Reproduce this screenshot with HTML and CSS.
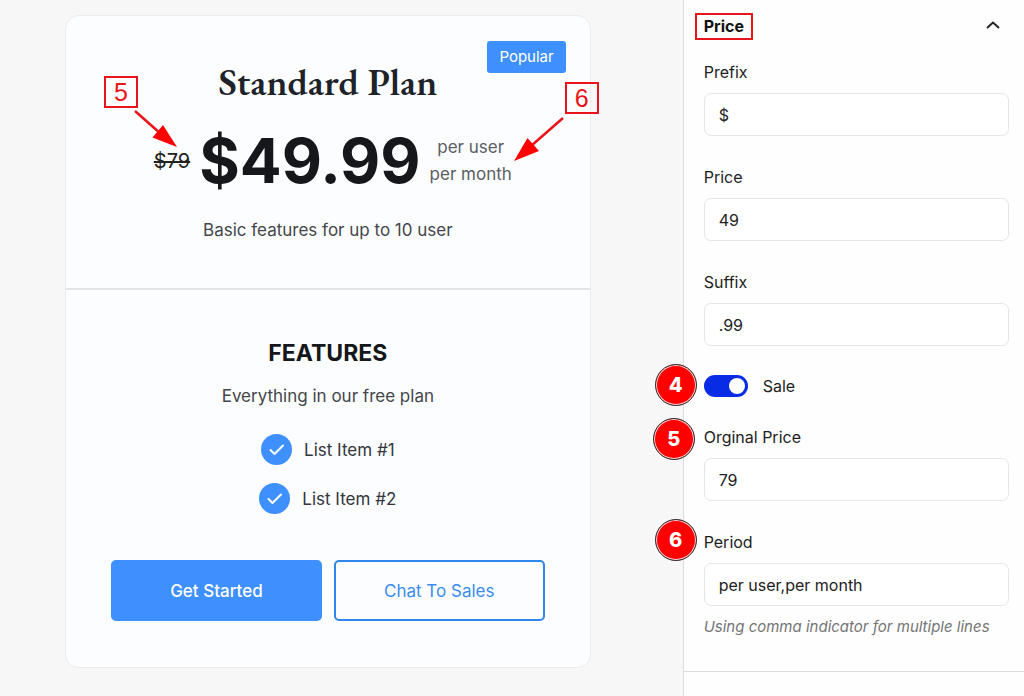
FILE: index.html
```html
<!DOCTYPE html>
<html lang="en">
<head>
    <meta charset="UTF-8">
    <meta name="viewport" content="width=device-width, initial-scale=1.0">
    <title>Pricing Table - Price Settings</title>
    <link rel="stylesheet" href="styles.css">
</head>
<body>
    <div class="editor">
        <main class="canvas">
            <article class="card">
                <span class="badge">Popular</span>

                <header class="card-header">
                    <h2 class="plan-title">Standard Plan</h2>
                    <div class="price-row">
                        <del class="old-price">$79</del>
                        <span class="price">$49.99</span>
                        <span class="period">per user<br>per month</span>
                    </div>
                    <p class="text">Basic features for up to 10 user</p>
                </header>

                <section class="card-body">
                    <h3 class="features-title">FEATURES</h3>
                    <p class="text">Everything in our free plan</p>
                    <ul class="features">
                        <li>
                            <svg class="check" viewBox="0 0 31 31"><circle cx="15.5" cy="15.5" r="15.5"/><path d="M9.5 16l4 4 8.500-8.500"/></svg>
                            List Item #1
                        </li>
                        <li>
                            <svg class="check" viewBox="0 0 31 31"><circle cx="15.5" cy="15.5" r="15.5"/><path d="M9.5 16l4 4 8.500-8.500"/></svg>
                            List Item #2
                        </li>
                    </ul>
                    <div class="buttons">
                        <button class="btn btn-primary" type="button">Get Started</button>
                        <button class="btn btn-outline" type="button">Chat To Sales</button>
                    </div>
                </section>

                <!-- callouts -->
                <span class="callout callout-old">5</span>
                <svg class="arrow arrow-old" viewBox="0 0 46 40">
                    <path class="line" d="M2 2l26 23"/>
                    <path class="head" d="M44 38L19.500 28.500L30 16z"/>
                </svg>
                <span class="callout callout-period">6</span>
                <svg class="arrow arrow-period" viewBox="0 0 52 46">
                    <path class="line" d="M50 2L18 30"/>
                    <path class="head" d="M1 45L14.500 22L26 35z"/>
                </svg>
            </article>
        </main>

        <aside class="sidebar">
            <form class="panel">
                <div class="panel-header">
                    <h2 class="panel-title">Price</h2>
                    <button class="toggle-panel" type="button" aria-label="Collapse">
                        <svg viewBox="0 0 14 8"><path d="M1 7l6-5.500L13 7"/></svg>
                    </button>
                </div>

                <div class="field">
                    <label for="prefix">Prefix</label>
                    <input type="text" id="prefix" value="$">
                </div>
                <div class="field">
                    <label for="price">Price</label>
                    <input type="text" id="price" value="49">
                </div>
                <div class="field">
                    <label for="suffix">Suffix</label>
                    <input type="text" id="suffix" value=".99">
                </div>
                <div class="field field-switch">
                    <span class="step step-sale">4</span>
                    <input class="switch" type="checkbox" id="sale" checked>
                    <label for="sale">Sale</label>
                </div>
                <div class="field">
                    <span class="step step-original">5</span>
                    <label for="original">Orginal Price</label>
                    <input type="text" id="original" value="79">
                </div>
                <div class="field field-last">
                    <span class="step step-period">6</span>
                    <label for="period">Period</label>
                    <input type="text" id="period" value="per user,per month">
                    <p class="help">Using comma indicator for multiple lines</p>
                </div>
            </form>
        </aside>
    </div>
</body>
</html>
```
FILE: styles.css
```css
* {
    box-sizing: border-box;
}

body {
    margin: 0;
    font-family: Inter, "Liberation Sans", sans-serif;
    font-size: 16px;
    color: #222;
    background: #f7f7f7;
}

h2, h3, p, ul {
    margin: 0;
    padding: 0;
}

button, input {
    font: inherit;
    color: inherit;
}

.editor {
    display: grid;
    grid-template-columns: 2fr 1fr;
    min-height: 100vh;
}

/* preview */
.canvas {
    padding: 15px 92px 28px 65px;
}

.card {
    position: relative;
    background: #fbfdff;
    border: 1px solid #ebecee;
    border-radius: 14px;
    text-align: center;
}

.badge {
    position: absolute;
    top: 25px;
    right: 24px;
    padding: 0 12px;
    border-radius: 3px;
    background: #3f90ff;
    font-size: 15px;
    line-height: 32px;
    color: #fff;
}

.card-header {
    padding: 42px 45px 44px;
    border-bottom: 2px solid #e2e4e8;
}

.plan-title {
    font-family: "EB Garamond", "Liberation Serif", serif;
    font-size: 38px;
    line-height: 48px;
    font-weight: 600;
    color: #20222a;
}

.price-row {
    display: flex;
    justify-content: center;
    align-items: center;
    gap: 9px;
    margin: 23px 0;
    padding-left: 10px;
}

.old-price {
    font-size: 20px;
}

.price {
    font-size: 62px;
    line-height: 64px;
    font-weight: 700;
    color: #15171a;
}

.period {
    font-size: 17px;
    line-height: 27px;
    color: #5c5e63;
}

.text {
    font-size: 17px;
    line-height: 28px;
    color: #44464b;
}

.card-body {
    padding: 47px 45px 46px;
}

.features-title {
    margin-bottom: 13px;
    font-size: 23px;
    line-height: 32px;
    color: #15171a;
}

.features {
    display: flex;
    flex-direction: column;
    gap: 18px;
    margin: 24px 0 46px;
    list-style: none;
}

.features li {
    display: flex;
    justify-content: center;
    align-items: center;
    gap: 12px;
    font-size: 17px;
    color: #34363c;
}

.check {
    width: 31px;
    height: 31px;
    fill: #3f90ff;
}

.check path {
    fill: none;
    stroke: #fff;
    stroke-width: 2;
    stroke-linecap: round;
    stroke-linejoin: round;
}

.buttons {
    display: grid;
    grid-template-columns: 1fr 1fr;
    gap: 12px;
}

.btn {
    height: 61px;
    border: 2px solid #3f90ff;
    border-radius: 5px;
    font-size: 17px;
    cursor: pointer;
}

.btn-primary {
    background: #3f90ff;
    font-weight: 500;
    color: #fff;
}

.btn-outline {
    background: #fbfdff;
    border-color: #2f85e8;
    color: #3a8cf0;
}

/* callouts over the card */
.callout {
    position: absolute;
    width: 34px;
    height: 32px;
    border: 2px solid #e8141a;
    font-family: "Liberation Sans", Arial, sans-serif;
    font-size: 25px;
    line-height: 28px;
    color: #e8141a;
}

.callout-old {
    top: 60px;
    left: 38px;
}

.callout-period {
    top: 66px;
    right: -9px;
}

.arrow {
    position: absolute;
}

.arrow .line {
    fill: none;
    stroke: #e8141a;
    stroke-width: 2.500;
}

.arrow .head {
    fill: #fe0000;
}

.arrow-old {
    top: 93px;
    left: 67px;
    width: 46px;
    height: 40px;
}

.arrow-period {
    top: 100px;
    right: 25px;
    width: 52px;
    height: 46px;
}

/* settings */
.sidebar {
    background: #fefefe;
    border-left: 1px solid #dcdcdc;
}

.panel {
    padding: 13px 15px 32px 20px;
    border-bottom: 1px solid #dcdcdc;
}

.panel-header {
    display: flex;
    justify-content: space-between;
    align-items: center;
    margin: 0 0 20px -9px;
}

.panel-title {
    padding: 0 7px;
    border: 2px solid #e8141a;
    font-size: 16px;
    line-height: 23px;
    color: #111;
}

.toggle-panel {
    display: flex;
    padding: 4px 9px 8px;
    border: 0;
    background: none;
    cursor: pointer;
}

.toggle-panel svg {
    width: 14px;
    height: 8px;
    fill: none;
    stroke: #222;
    stroke-width: 2;
}

.field {
    position: relative;
    display: flex;
    flex-direction: column;
    gap: 9px;
    margin-bottom: 29px;
}

.field label {
    line-height: 24px;
}

.field input[type="text"] {
    width: 100%;
    height: 43px;
    padding: 0 14px;
    border: 1px solid #e6e6e6;
    border-radius: 7px;
    background: #fff;
}

.field-switch {
    flex-direction: row;
    align-items: center;
    gap: 15px;
    margin-bottom: 28px;
}

.field-switch label {
    line-height: 22px;
}

.field-last {
    margin-bottom: 0;
}

.switch {
    appearance: none;
    display: flex;
    width: 44px;
    height: 22px;
    margin: 0;
    padding: 3px;
    border-radius: 11px;
    background: #aaa;
    cursor: pointer;
}

.switch::before {
    content: "";
    width: 16px;
    height: 16px;
    border-radius: 50%;
    background: #fff;
}

.switch:checked {
    justify-content: flex-end;
    background: #082be6;
}

.help {
    font-size: 15px;
    line-height: 24px;
    font-style: italic;
    color: #757575;
}

/* numbered steps next to the fields */
.step {
    position: absolute;
    top: -11px;
    left: -49px;
    width: 42px;
    height: 42px;
    border: 1px solid #333;
    border-radius: 50%;
    box-shadow: inset 0 0 0 1px #ffd9d9;
    background: #fe0000;
    font-size: 20px;
    line-height: 40px;
    font-weight: 800;
    text-align: center;
    color: #fff;
}

.step-original {
    top: -7px;
    left: -51px;
}
```
